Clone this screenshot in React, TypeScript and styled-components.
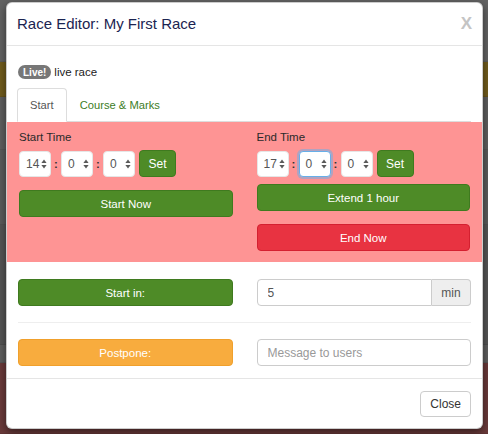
import React from "react";
import styled, { createGlobalStyle, css } from "styled-components";

const GlobalStyle = createGlobalStyle`
  html, body {
    margin: 0;
    padding: 0;
  }
  body {
    font-family: "Liberation Sans", Arial, sans-serif;
    font-size: 11.5px;
    color: #333;
  }
  * {
    box-sizing: border-box;
  }
`;

const bands = [
  { h: 62, c: "#636363" },
  { h: 35, c: "#715c1d" },
  { h: 53, c: "#5f5f5f" },
  { h: 75, c: "#5b5b5b" },
  { h: 120, c: "#555555" },
  { h: 18, c: "#5e5e5e" },
  { h: 71, c: "#6a3a3a" },
];

const Stage = styled.div`
  position: relative;
  width: 488px;
  height: 434px;
  overflow: hidden;
`;

const Backdrop = styled.div`
  display: flex;
  flex-direction: column;
  height: 100%;
`;

const Band = styled.div<{ $h: number; $c: string }>`
  height: ${(p) => p.$h}px;
  background: ${(p) => p.$c};
  border-bottom: 1px solid rgba(0, 0, 0, 0.08);
`;

const Modal = styled.div`
  position: absolute;
  left: 6px;
  top: 2px;
  width: 477px;
  background: #fff;
  border: 1px solid rgba(0, 0, 0, 0.2);
  border-radius: 6px;
  box-shadow: 0 3px 9px rgba(0, 0, 0, 0.5);
  overflow: hidden;
`;

const Header = styled.div`
  display: flex;
  align-items: center;
  justify-content: space-between;
  padding: 13px 10px 13px 10px;
  border-bottom: 1px solid #e5e5e5;
`;

const Title = styled.h4`
  margin: 0;
  font-size: 15px;
  line-height: 16px;
  font-weight: normal;
  color: #1b2451;
`;

const CloseX = styled.span`
  font-size: 17px;
  line-height: 16px;
  font-weight: bold;
  color: #c4c4c4;
`;

const Body = styled.div`
  padding: 16px 11px 12px;
`;

const StatusLine = styled.div`
  display: flex;
  align-items: center;
  gap: 3px;
  height: 20px;
  color: #222;
`;

const Badge = styled.span`
  display: inline-flex;
  align-items: center;
  height: 14px;
  padding: 0 5px;
  border-radius: 8px;
  background: #777;
  color: #fff;
  font-size: 10px;
  font-weight: bold;
`;

const TabList = styled.div`
  display: flex;
  margin-top: 6px;
  border-bottom: 1px solid #ddd;
`;

const Tab = styled.div<{ $active?: boolean }>`
  height: 34px;
  margin-bottom: -1px;
  padding: 0 12px;
  display: flex;
  align-items: center;
  border: 1px solid transparent;
  border-radius: 4px 4px 0 0;
  color: #3d7d1f;
  font-size: 11.2px;
  ${(p) =>
    p.$active &&
    css`
      margin-left: -1px;
      color: #555;
      background: #fff;
      border-color: #ddd;
      border-bottom-color: transparent;
    `}
`;

const TwoColumns = styled.div`
  display: grid;
  grid-template-columns: minmax(0, 1fr) minmax(0, 1fr);
  column-gap: 24px;
`;

const TimePanel = styled(TwoColumns)`
  margin: 0 -11px;
  padding: 7px 12px 11px;
  background: #fe9494;
`;

const Column = styled.div`
  display: flex;
  flex-direction: column;
`;

const Label = styled.div`
  line-height: 16px;
  margin-bottom: 5px;
  color: #2a2a2a;
`;

const TimeRow = styled.div`
  display: flex;
  align-items: center;
  height: 27px;
`;

const Spinner = styled.div<{ $focused?: boolean }>`
  width: 32px;
  height: 26px;
  display: flex;
  align-items: center;
  justify-content: space-between;
  padding: 0 3px 0 6px;
  background: #fff;
  border: 1px solid ${(p) => (p.$focused ? "#66afe9" : "#e6e6e6")};
  border-radius: 4px;
  font-size: 12px;
  color: #555;
  ${(p) =>
    p.$focused &&
    css`
      box-shadow: 0 0 0 2px rgba(102, 175, 233, 0.5);
    `}
`;

const Colon = styled.span`
  width: 10px;
  text-align: center;
  font-weight: bold;
  color: #333;
`;

const colors = {
  green: { bg: "#4e8b27", border: "#3f7a1f" },
  red: { bg: "#e83341", border: "#d42030" },
  orange: { bg: "#f8ac3e", border: "#f0a02c" },
};

const ActionButton = styled.button<{ $tone: keyof typeof colors; $gap?: number }>`
  height: 27px;
  width: 100%;
  margin-top: ${(p) => p.$gap ?? 0}px;
  border-radius: 4px;
  border: 1px solid ${(p) => colors[p.$tone].border};
  background: ${(p) => colors[p.$tone].bg};
  color: #fff;
  font-family: inherit;
  font-size: 11.5px;
  padding: 0;
`;

const SetButton = styled(ActionButton)`
  width: 37px;
  margin-left: 4px;
  font-size: 12px;
`;

const Controls = styled.div`
  padding-top: 17px;
  display: flex;
  flex-direction: column;
`;

const Divider = styled.hr`
  margin: 16px 0;
  border: 0;
  border-top: 1px solid #eee;
`;

const InputGroup = styled.div`
  display: flex;
  height: 27px;
`;

const TextInput = styled.input<{ $grouped?: boolean }>`
  flex: 1;
  min-width: 0;
  width: 100%;
  height: 27px;
  padding: 0 10px;
  border: 1px solid #ccc;
  border-radius: ${(p) => (p.$grouped ? "4px 0 0 4px" : "4px")};
  font-family: inherit;
  font-size: 12px;
  color: #555;
  &::placeholder {
    color: #999;
  }
`;

const Addon = styled.span`
  flex: none;
  width: 39px;
  display: flex;
  align-items: center;
  justify-content: center;
  background: #eee;
  border: 1px solid #ccc;
  border-left: 0;
  border-radius: 0 4px 4px 0;
  color: #555;
  font-size: 12px;
`;

const Footer = styled.div`
  display: flex;
  justify-content: flex-end;
  padding: 12px 11px 11px;
  border-top: 1px solid #e5e5e5;
`;

const CloseButton = styled.button`
  height: 26px;
  padding: 0 9px;
  background: #fff;
  border: 1px solid #ccc;
  border-radius: 4px;
  font-family: inherit;
  font-size: 12px;
  color: #333;
`;

const Arrows = () => (
  <svg width="6" height="10" viewBox="0 0 6 10">
    <path d="M3 0.5 L5.6 4 L0.4 4 Z" fill="#5a5a5a" />
    <path d="M3 9.5 L5.6 6 L0.4 6 Z" fill="#5a5a5a" />
  </svg>
);

const TimeInput = ({ value, focused }: { value: number; focused?: boolean }) => (
  <Spinner $focused={focused}>
    <span>{value}</span>
    <Arrows />
  </Spinner>
);

const TimePicker = ({ h, focusMinute }: { h: number; focusMinute?: boolean }) => (
  <TimeRow>
    <TimeInput value={h} />
    <Colon>:</Colon>
    <TimeInput value={0} focused={focusMinute} />
    <Colon>:</Colon>
    <TimeInput value={0} />
    <SetButton $tone="green">Set</SetButton>
  </TimeRow>
);

export default function App() {
  return (
    <Stage>
      <GlobalStyle />
      <Backdrop>
        {bands.map((b, i) => (
          <Band key={i} $h={b.h} $c={b.c} />
        ))}
      </Backdrop>

      <Modal>
        <Header>
          <Title>Race Editor: My First Race</Title>
          <CloseX>X</CloseX>
        </Header>

        <Body>
          <StatusLine>
            <Badge>Live!</Badge>
            <span>live race</span>
          </StatusLine>

          <TabList>
            <Tab $active>Start</Tab>
            <Tab>Course &amp; Marks</Tab>
          </TabList>

          <TimePanel>
            <Column>
              <Label>Start Time</Label>
              <TimePicker h={14} />
              <ActionButton $tone="green" $gap={13}>
                Start Now
              </ActionButton>
            </Column>
            <Column>
              <Label>End Time</Label>
              <TimePicker h={17} focusMinute />
              <ActionButton $tone="green" $gap={7}>
                Extend 1 hour
              </ActionButton>
              <ActionButton $tone="red" $gap={13}>
                End Now
              </ActionButton>
            </Column>
          </TimePanel>

          <Controls>
            <TwoColumns>
              <ActionButton $tone="green">Start in:</ActionButton>
              <InputGroup>
                <TextInput $grouped defaultValue="5" />
                <Addon>min</Addon>
              </InputGroup>
            </TwoColumns>
            <Divider />
            <TwoColumns>
              <ActionButton $tone="orange">Postpone:</ActionButton>
              <InputGroup>
                <TextInput placeholder="Message to users" />
              </InputGroup>
            </TwoColumns>
          </Controls>
        </Body>

        <Footer>
          <CloseButton>Close</CloseButton>
        </Footer>
      </Modal>
    </Stage>
  );
}
